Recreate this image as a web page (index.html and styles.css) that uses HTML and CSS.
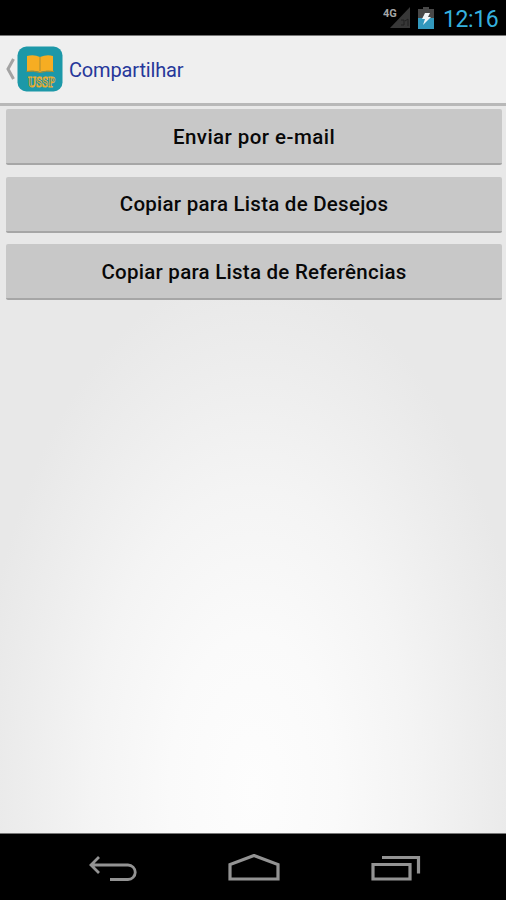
FILE: index.html
```html
<!DOCTYPE html>
<html lang="pt-BR">
<head>
<meta charset="utf-8">
<title>Compartilhar</title>
<link rel="stylesheet" href="styles.css">
</head>
<body>
<div class="screen">
  <div class="status-bar">
    <svg class="signal" width="28" height="24" viewBox="0 0 28 24">
      <path d="M27 1V22H7Z" fill="#373737"/>
      <path d="M18 14h3v5h-3M22 15l3-2v7" fill="none" stroke="#202020" stroke-width="1"/>
      <text class="network" x="0" y="11">4G</text>
    </svg>
    <svg class="battery" width="16" height="22" viewBox="0 0 16 22">
      <path d="M5 0h6v2h5v9H0V2h5Z" fill="#484848"/>
      <path d="M0 11h16v11H0Z" fill="#3298bd"/>
      <path d="M7 6h5l-2 4h3l-8 8 2-6H4Z" fill="#f2f6f8"/>
    </svg>
    <span class="clock">12:16</span>
  </div>
  <header class="action-bar">
    <svg class="up" width="10" height="22" viewBox="0 0 10 22"><path d="M8.500 1L3 11l5.500 10" fill="none" stroke="#a3a3a3" stroke-width="3"/></svg>
    <svg class="app-icon" width="46" height="46" viewBox="0 0 46 46">
      <rect x=".5" y=".5" width="45" height="45" rx="9" fill="#1c98a8"/>
      <path d="M10 10q7-2 13 1q7-3 13-1v15q-7-1-13 1q-6-2-13-1Z" fill="#f6ad22"/>
      <path d="M23 11v14M9.500 25.500q7-1 13.500 1q6-2 14-1" fill="none" stroke="#a78c35" stroke-width="1"/>
      <text class="logo-text" x="11" y="41" textLength="27" lengthAdjust="spacingAndGlyphs">USSP</text>
    </svg>
    <h1 class="title">Compartilhar</h1>
  </header>
  <main class="content">
    <button class="action email">Enviar por e-mail</button>
    <button class="action wishes">Copiar para Lista de Desejos</button>
    <button class="action references">Copiar para Lista de Referências</button>
  </main>
  <nav class="nav-bar">
    <svg width="50" height="30" viewBox="0 0 50 30"><path d="M12 2L4 10l8 8M4 10h37a6.900 6.900 0 0 1 0 14.500H23" transform="translate(0 1)" fill="none" stroke="#939393" stroke-width="2.800"/></svg>
    <svg width="54" height="30" viewBox="0 0 54 30"><path d="M3 25V10.500L27 1.500l24 9V25Z" fill="none" stroke="#939393" stroke-width="3.200"/></svg>
    <svg width="50" height="30" viewBox="0 0 50 30"><path d="M2 10.500h37V25H2ZM11 3.500h36.500V19.500" fill="none" stroke="#939393" stroke-width="3.200"/></svg>
  </nav>
</div>
</body>
</html>
```

FILE: styles.css
```css
* { box-sizing: border-box; }
body { margin: 0; font-family: Roboto, sans-serif; }
.screen {
  display: flex;
  flex-direction: column;
  width: 506px;
  height: 900px;
  background: radial-gradient(ellipse 278px 520px at 253px 790px, #fdfdfd 0%, #fafafa 30%, #f4f4f4 58%, #ededed 82%, #e8e8e8 100%);
}
.status-bar {
  display: flex;
  height: 36px;
  padding: 6px 7px 0 0;
  justify-content: flex-end;
  background: #000;
  border-bottom: 1px solid #777;
}
.signal { margin-right: 7px; }
.network { fill: #a5a5a5; font: 700 11px Roboto, sans-serif; }
.battery { margin: 1px 9px 0 0; }
.clock { color: #35b1df; font-size: 23px; line-height: 26px; width: 56px; padding-top: 1px; white-space: nowrap; letter-spacing: -.4px; }
.action-bar {
  display: flex;
  align-items: center;
  height: 70px;
  padding: 0 0 2px 5px;
  background: #efefef;
  border-bottom: 3px solid #b8b8b8;
}
.up { margin-right: 2px; }
.app-icon { margin-top: 1px; }
.logo-text { fill: #1c8e99; stroke: #f0ad2b; stroke-width: .9px; font: 700 14px "Liberation Serif", serif; }
.title { margin: 2px 0 0 6px; color: #26379a; font-size: 20px; font-weight: 400; line-height: 26px; letter-spacing: -.15px; }
.content { display: flex; flex: 1; flex-direction: column; gap: 11.500px; padding: 3px 4px 0 6px; }
.action {
  height: 56px;
  padding: 1px 0 0;
  border: 0;
  border-bottom: 2px solid #a6a6a6;
  border-radius: 2px;
  background: #c8c8c8;
  color: #080808;
  font: 500 20.500px/26px Roboto, sans-serif;
  letter-spacing: .25px;
}
.email { letter-spacing: .45px; }
.nav-bar {
  display: flex;
  height: 67px;
  padding: 20px 85px 0 87px;
  justify-content: space-between;
  background: #000;
  border-top: 1px solid #777;
}
```
